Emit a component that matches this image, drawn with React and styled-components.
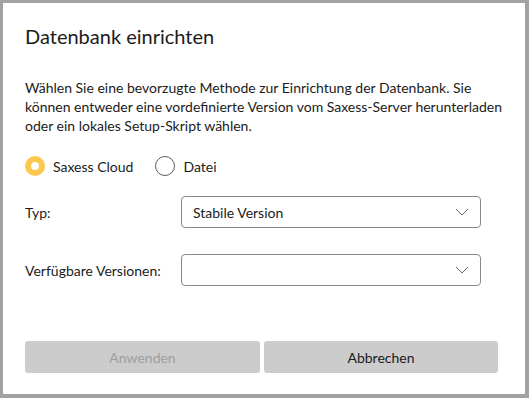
import React, { useState } from "react";
import styled, { createGlobalStyle } from "styled-components";

const Global = createGlobalStyle`
    html, body {
        margin: 0;
        padding: 0;
        background: #a2a2a2;
    }
    body {
        font-family: Lato, "Open Sans", sans-serif;
        color: #1b1b1b;
    }
`

const Dialog = styled.div`
    box-sizing: border-box;
    margin: 3px 4px 0 3px;
    height: 391px;
    background: #ffffff;
    padding: 19px 27px 0 22px;
    display: flex;
    flex-direction: column;
`

const Title = styled.h1`
    margin: 0;
    font-size: 20px;
    font-weight: 400;
    line-height: 28px;
`

const Text = styled.p`
    margin: 28px -17px 0 0;
    font-size: 14px;
    line-height: 19px;
`

const RadioGroup = styled.div`
    display: flex;
    align-items: center;
    gap: 22px;
    margin-top: 21px;
`

const Radio = styled.label`
    display: flex;
    align-items: center;
    gap: 8px;
    font-size: 14px;
    cursor: pointer;
`

const Dot = styled.span`
    box-sizing: border-box;
    width: 20px;
    height: 20px;
    border-radius: 50%;
    background: #ffffff;
    border: ${p => (p.$checked ? "6px solid #fcc84f" : "1px solid #5c5c5c")};
`

const Row = styled.div`
    display: flex;
    align-items: center;
    margin-top: ${p => p.$top}px;
`

const Label = styled.span`
    width: 156px;
    font-size: 14px;
`

const Select = styled.div`
    box-sizing: border-box;
    width: 300px;
    height: 32px;
    border: 1px solid #8a8a8a;
    border-radius: 4px;
    display: flex;
    align-items: center;
    justify-content: space-between;
    padding: 0 11px 0 11px;
    font-size: 14px;
`

const Buttons = styled.div`
    display: grid;
    grid-template-columns: 235px 234px;
    gap: 4px;
    margin-top: auto;
    margin-bottom: 21px;
`

const Button = styled.button`
    height: 32px;
    border: none;
    border-radius: 3px;
    background: #cccccc;
    font-family: inherit;
    font-size: 14px;
    color: ${p => (p.disabled ? "#9e9e9e" : "#1b1b1b")};
`

const Chevron = () => (
    <svg width="14" height="8" viewBox="0 0 14 8" fill="none">
        <path d="M1 1l6 6 6-6" stroke="#6a6a6a" strokeWidth="1" />
    </svg>
)

const App = () => {
    const [source, setSource] = useState("cloud")

    return (
        <>
            <Global />
            <Dialog>
                <Title>Datenbank einrichten</Title>
                <Text>
                    Wählen Sie eine bevorzugte Methode zur Einrichtung der Datenbank. Sie
                    können entweder eine vordefinierte Version vom Saxess-Server herunterladen
                    oder ein lokales Setup-Skript wählen.
                </Text>
                <RadioGroup>
                    <Radio onClick={() => setSource("cloud")}>
                        <Dot $checked={source === "cloud"} />
                        Saxess Cloud
                    </Radio>
                    <Radio onClick={() => setSource("file")}>
                        <Dot $checked={source === "file"} />
                        Datei
                    </Radio>
                </RadioGroup>
                <Row $top={20}>
                    <Label>Typ:</Label>
                    <Select>
                        <span>Stabile Version</span>
                        <Chevron />
                    </Select>
                </Row>
                <Row $top={26}>
                    <Label>Verfügbare Versionen:</Label>
                    <Select>
                        <span></span>
                        <Chevron />
                    </Select>
                </Row>
                <Buttons>
                    <Button disabled>Anwenden</Button>
                    <Button>Abbrechen</Button>
                </Buttons>
            </Dialog>
        </>
    )
}

export default App
